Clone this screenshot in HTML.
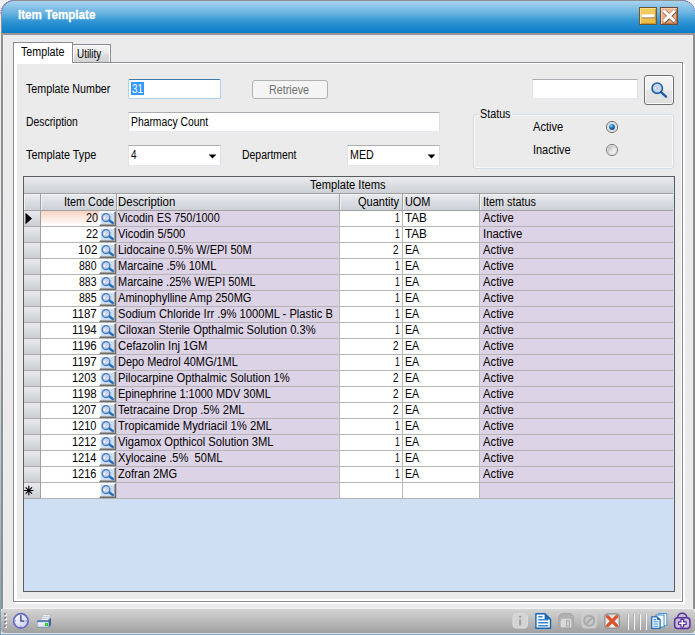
<!DOCTYPE html>
<html lang="en"><head><meta charset="utf-8"><title>Item Template</title>
<style>
html,body{margin:0;padding:0}
body{width:695px;height:635px;overflow:hidden;position:relative;background:#f0f0f0;font-family:"Liberation Sans",sans-serif;font-size:12px;color:#000}
div,span,svg{position:absolute;box-sizing:border-box}
.t{white-space:pre;line-height:14px;height:14px;transform-origin:0 0}
.t.b{font-weight:bold;-webkit-text-stroke:.3px #fff}
#edgeL{left:0;top:14px;width:1px;height:621px;background:linear-gradient(#eef0f2 0%,#e6ebef 45%,#9db9cb 85%,#6f9db8 100%)}
#edgeB{left:0;top:633px;width:695px;height:2px;background:#79a4c7}
#win{left:1px;top:20px;width:694px;height:589px;background:#ebebeb;border:2px solid #8e8e8e;border-top:0;border-bottom:0;box-shadow:inset 1px 0 0 #eef0f2,inset -1px 0 0 #eef0f2}
#title{left:1px;top:0;width:694px;height:33px;border-left:1px solid #8e8e8e;border-top:1px solid #8e8e8e;border-radius:13px 13px 0 0;background:linear-gradient(#a8d4ee 0%,#6db5e1 35%,#2f94d4 65%,#0b7bc6 100%)}
#title .tt{left:16px;top:7px;color:#fff;font-weight:bold;font-size:12px;line-height:16px;white-space:pre;transform:scaleX(.93);transform-origin:0 0}
#tline{left:1px;top:33px;width:694px;height:2px;background:#9a9695}
/* caption buttons */
.cb{top:7px;width:18px;height:18px;border:1px solid #6b4a22}
/* tabs */
#pane{left:13px;top:62px;width:670px;height:540px;background:#fff;border:1px solid #898c95;box-shadow:2px 2px 0 #fff}
#page{left:17px;top:64px;width:664px;height:535px;background:#ebebeb}
#tab1{left:13px;top:42px;width:60px;height:21px;background:#fff;border:1px solid #898c95;border-bottom:0}
#tab2{left:72px;top:44px;width:39px;height:18px;border:1px solid #898c95;border-bottom:0;background:linear-gradient(#f3f3f3 0%,#ececec 48%,#dedede 52%,#d3d3d3 100%);box-shadow:inset 1px 1px 0 #fbfbfb,inset -1px 0 0 #fbfbfb}
/* inputs */
.in{background:#fff;border:1px solid #e3e9ef;border-top-color:#abadb3;border-left-color:#e2e3ea;border-right-color:#dbdfe6}
.in.foc{border-color:#b0d0e8;border-top-color:#3d7bad;border-radius:2px}
.arr{width:0;height:0;border-left:4px solid transparent;border-right:4px solid transparent;border-top:4px solid #000}
#btnR{left:252px;top:80px;width:76px;height:19px;border:1px solid #adb2b5;border-radius:3px;background:#f4f4f4;color:#838383}
#btnS{left:644px;top:75px;width:30px;height:30px;border:1px solid #707070;border-radius:3px;background:linear-gradient(#f4f4f4 0%,#efefef 48%,#e6e6e6 52%,#dedede 100%);box-shadow:inset 0 0 0 1px #fbfbfb}
#grp{left:473px;top:114px;width:201px;height:55px;border:1px solid #d3dfe8;border-radius:3px;background:transparent;box-shadow:inset 0 0 0 1px #f6f6f6}
.rad{width:12px;height:12px;border-radius:50%;border:1px solid #8e8f8f;background:radial-gradient(circle at 50% 50%,#fdfdfd 0%,#e4e4e4 55%,#c4c4c4 100%)}
/* grid */
#grid{left:23px;top:176px;width:652px;height:416px;border:1px solid #5c5c5c;background:#cfdff3;overflow:hidden}
#grid .cap{left:0;top:0;width:649px;height:17px;background:linear-gradient(#e9ebee,#cdd0d6);border-bottom:1px solid #a0a0a0}
#grid .hdr{left:0;top:17px;width:650px;height:17px}
#grid .hc{top:0;height:17px;background:linear-gradient(#e9ebee,#cdd0d6);border-right:1px solid #a0a0a0;border-bottom:1px solid #a0a0a0;box-shadow:inset 1px 1px 0 #f1f2f4;overflow:hidden}
.row{left:0;width:650px;height:16px}
.rs{left:0;top:0;width:17px;height:16px;background:linear-gradient(#e8eaed,#cbced4);border-right:1px solid #a0a0a0;border-bottom:1px solid #a8a8a8}
.c{top:0;height:16px;border-right:1px solid #bababa;border-bottom:1px solid #b4b4b4;overflow:hidden}
.c.w{background:#fff}
.c.p{background:#ddd3e6}
.c.act{background:linear-gradient(#fbd3c4 0%,#fdece5 55%,#fff 100%)}
.sb{right:0;top:0;width:17px;height:15px;background:#cddff5;border:1px solid #6b6b6b;border-top-color:#fff;border-left-color:#fff;box-shadow:inset -1px -1px 0 #a3a3a3,inset 1px 1px 0 #f1f6fd}
.sb .mg{left:-1px;top:-1px}
.star{font-size:13px}
/* toolbar */
#tb{left:1px;top:609px;width:694px;height:24px;border-radius:4px;background:linear-gradient(#d4d4d4 0%,#bebebe 45%,#a8a8a8 85%,#a1a1a1 100%)}
#tbl{left:1px;top:633px;width:694px;height:1px;background:#e2e4e6}

#tbh{left:3px;top:608px;width:690px;height:1px;background:#f3f3f3}

</style></head>
<body>
<div id="edgeL"></div><div id="edgeB"></div>
<div id="win"></div>
<div id="title"></div>
<div id="tline"></div>
<svg id="dots" width="695" height="16" viewBox="0 0 695 16" style="left:0;top:0"><path d="M0.7 13.4 A13.2 13.2 0 0 1 13.4 0.5" fill="none" stroke="#5c5cf2" stroke-width="1" stroke-dasharray="1.1 1.3"/><path d="M682.2 0.3 A13 13 0 0 1 695.2 12.6" fill="none" stroke="#5c5cf2" stroke-width="1" stroke-dasharray="1.1 1.3"/></svg>
<div class="cb" id="bmin" style="left:639px;background:linear-gradient(#f6cd63,#edba43);border-color:#6d5b38;box-shadow:inset 1px 1px 0 #f9dd8e,inset -1px -1px 0 #c6962f"><svg width="16" height="16" viewBox="0 0 16 16" style="left:0;top:0"><rect x="1.9" y="6.7" width="13" height="3.6" rx="1.2" fill="#6f5f40"/><rect x="1.7" y="6.3" width="13" height="3.2" rx="1.2" fill="#fff"/></svg></div>
<div class="cb" id="bcls" style="left:660px;background:linear-gradient(#f6b98e,#e79a69);border-color:#6b4a38;box-shadow:inset 1px 1px 0 #fbd0b0,inset -1px -1px 0 #b8744a"><svg width="16" height="16" viewBox="0 0 16 16" style="left:0;top:0"><path d="M3 3.1 L13.9 13.7 M13.9 3.1 L3 13.7" stroke="#4e3a30" stroke-width="4.2" stroke-linecap="butt" opacity=".85"/><path d="M2.7 2.7 L13.7 13.4 M13.7 2.7 L2.7 13.4" stroke="#fff" stroke-width="3" stroke-linecap="butt"/></svg></div>
<div id="tbh"></div><div id="pane"></div><div id="page"></div>
<div id="tab2"></div>
<div id="tab1"></div>
<div class="in foc" style="left:128px;top:79px;width:93px;height:20px"><div style="left:2px;top:2px;width:13px;height:13px;background:#3399ff"></div></div>
<div class="in" style="left:128px;top:112px;width:312px;height:20px"></div>
<div class="in" style="left:128px;top:145px;width:93px;height:21px"><svg width="9" height="5" viewBox="0 0 9 5" style="left:79px;top:8px"><path d="M0.6 0.5 H8.4 L4.5 4.6 Z" fill="#000"/></svg></div>
<div class="in" style="left:347px;top:145px;width:93px;height:21px"><svg width="9" height="5" viewBox="0 0 9 5" style="left:79px;top:8px"><path d="M0.6 0.5 H8.4 L4.5 4.6 Z" fill="#000"/></svg></div>
<div id="btnR"></div>
<div class="in" style="left:532px;top:79px;width:106px;height:20px"></div>
<div id="btnS"><svg width="20" height="20" viewBox="0 0 20 20" style="left:4px;top:4px"><circle cx="8.2" cy="8.2" r="5.2" fill="#c9d3ec" stroke="#1d5fa6" stroke-width="1.6"/><circle cx="6.4" cy="8" r="1.5" fill="#fff" stroke="#8fb0dc" stroke-width=".6"/><path d="M12.3 12.3 L17 16.6" stroke="#1d5fa6" stroke-width="2.4" stroke-linecap="round"/></svg></div>
<div id="grp"></div><div style="left:479px;top:113px;width:34px;height:4px;background:#ebebeb"></div>
<svg width="14" height="14" viewBox="0 0 14 14" style="left:605px;top:120px"><defs><radialGradient id="rdot" cx=".38" cy=".3" r=".75"><stop offset="0" stop-color="#9fe0ff"/><stop offset=".35" stop-color="#2a8ad0"/><stop offset="1" stop-color="#083a78"/></radialGradient><linearGradient id="roff" x1="0" y1="0" x2="1" y2="1"><stop offset="0" stop-color="#b4b4b4"/><stop offset=".55" stop-color="#e8e8e8"/><stop offset="1" stop-color="#ffffff"/></linearGradient></defs><circle cx="7" cy="7" r="5.6" fill="#f6f6f6" stroke="#6e6e6e" stroke-width="1"/><circle cx="7" cy="7" r="4.2" fill="#eef3f7" stroke="#b9c4cc" stroke-width=".7"/><circle cx="7" cy="7" r="2.9" fill="url(#rdot)"/></svg>
<svg width="14" height="14" viewBox="0 0 14 14" style="left:605px;top:143px"><circle cx="7" cy="7" r="5.6" fill="#f6f6f6" stroke="#7a7a7a" stroke-width="1"/><circle cx="7" cy="7" r="4.3" fill="url(#roff)" stroke="#c4c4c4" stroke-width=".6"/></svg>

<div id="grid">
<div class="cap"></div>
<div class="hdr">
<div class="hc" style="left:0px;width:17px"></div>
<div class="hc" style="left:17px;width:76px"></div>
<div class="hc" style="left:93px;width:223px"></div>
<div class="hc" style="left:316px;width:63px"></div>
<div class="hc" style="left:379px;width:77px"></div>
<div class="hc" style="left:456px;width:193px;border-right:0"></div>
</div>
<div class="row" style="top:34px">
<div class="rs"><svg width="8" height="13" viewBox="0 0 8 13" style="left:1px;top:1px"><path d="M0.5 0.8 L7 6.5 L0.5 12.2 Z" fill="#000"/></svg></div>
<div class="c w act" style="left:17px;width:76px"><span class="sb"><svg class="mg" width="17" height="15" viewBox="0 0 17 15"><circle cx="7" cy="6.6" r="3.9" fill="#cbd2ef" stroke="#3b78bc" stroke-width="1.3"/><circle cx="5.6" cy="6.7" r="1" fill="#fff"/><path d="M10.4 9.5 L13.8 12" stroke="#2d6db3" stroke-width="2.4" stroke-linecap="round"/></svg></span></div>
<div class="c p" style="left:93px;width:223px"></div>
<div class="c w" style="left:316px;width:63px"></div>
<div class="c w" style="left:379px;width:77px"></div>
<div class="c p" style="left:456px;width:193px;border-right:0"></div>
</div>
<div class="row" style="top:50px">
<div class="rs"></div>
<div class="c w" style="left:17px;width:76px"><span class="sb"><svg class="mg" width="17" height="15" viewBox="0 0 17 15"><circle cx="7" cy="6.6" r="3.9" fill="#cbd2ef" stroke="#3b78bc" stroke-width="1.3"/><circle cx="5.6" cy="6.7" r="1" fill="#fff"/><path d="M10.4 9.5 L13.8 12" stroke="#2d6db3" stroke-width="2.4" stroke-linecap="round"/></svg></span></div>
<div class="c p" style="left:93px;width:223px"></div>
<div class="c w" style="left:316px;width:63px"></div>
<div class="c w" style="left:379px;width:77px"></div>
<div class="c p" style="left:456px;width:193px;border-right:0"></div>
</div>
<div class="row" style="top:66px">
<div class="rs"></div>
<div class="c w" style="left:17px;width:76px"><span class="sb"><svg class="mg" width="17" height="15" viewBox="0 0 17 15"><circle cx="7" cy="6.6" r="3.9" fill="#cbd2ef" stroke="#3b78bc" stroke-width="1.3"/><circle cx="5.6" cy="6.7" r="1" fill="#fff"/><path d="M10.4 9.5 L13.8 12" stroke="#2d6db3" stroke-width="2.4" stroke-linecap="round"/></svg></span></div>
<div class="c p" style="left:93px;width:223px"></div>
<div class="c w" style="left:316px;width:63px"></div>
<div class="c w" style="left:379px;width:77px"></div>
<div class="c p" style="left:456px;width:193px;border-right:0"></div>
</div>
<div class="row" style="top:82px">
<div class="rs"></div>
<div class="c w" style="left:17px;width:76px"><span class="sb"><svg class="mg" width="17" height="15" viewBox="0 0 17 15"><circle cx="7" cy="6.6" r="3.9" fill="#cbd2ef" stroke="#3b78bc" stroke-width="1.3"/><circle cx="5.6" cy="6.7" r="1" fill="#fff"/><path d="M10.4 9.5 L13.8 12" stroke="#2d6db3" stroke-width="2.4" stroke-linecap="round"/></svg></span></div>
<div class="c p" style="left:93px;width:223px"></div>
<div class="c w" style="left:316px;width:63px"></div>
<div class="c w" style="left:379px;width:77px"></div>
<div class="c p" style="left:456px;width:193px;border-right:0"></div>
</div>
<div class="row" style="top:98px">
<div class="rs"></div>
<div class="c w" style="left:17px;width:76px"><span class="sb"><svg class="mg" width="17" height="15" viewBox="0 0 17 15"><circle cx="7" cy="6.6" r="3.9" fill="#cbd2ef" stroke="#3b78bc" stroke-width="1.3"/><circle cx="5.6" cy="6.7" r="1" fill="#fff"/><path d="M10.4 9.5 L13.8 12" stroke="#2d6db3" stroke-width="2.4" stroke-linecap="round"/></svg></span></div>
<div class="c p" style="left:93px;width:223px"></div>
<div class="c w" style="left:316px;width:63px"></div>
<div class="c w" style="left:379px;width:77px"></div>
<div class="c p" style="left:456px;width:193px;border-right:0"></div>
</div>
<div class="row" style="top:114px">
<div class="rs"></div>
<div class="c w" style="left:17px;width:76px"><span class="sb"><svg class="mg" width="17" height="15" viewBox="0 0 17 15"><circle cx="7" cy="6.6" r="3.9" fill="#cbd2ef" stroke="#3b78bc" stroke-width="1.3"/><circle cx="5.6" cy="6.7" r="1" fill="#fff"/><path d="M10.4 9.5 L13.8 12" stroke="#2d6db3" stroke-width="2.4" stroke-linecap="round"/></svg></span></div>
<div class="c p" style="left:93px;width:223px"></div>
<div class="c w" style="left:316px;width:63px"></div>
<div class="c w" style="left:379px;width:77px"></div>
<div class="c p" style="left:456px;width:193px;border-right:0"></div>
</div>
<div class="row" style="top:130px">
<div class="rs"></div>
<div class="c w" style="left:17px;width:76px"><span class="sb"><svg class="mg" width="17" height="15" viewBox="0 0 17 15"><circle cx="7" cy="6.6" r="3.9" fill="#cbd2ef" stroke="#3b78bc" stroke-width="1.3"/><circle cx="5.6" cy="6.7" r="1" fill="#fff"/><path d="M10.4 9.5 L13.8 12" stroke="#2d6db3" stroke-width="2.4" stroke-linecap="round"/></svg></span></div>
<div class="c p" style="left:93px;width:223px"></div>
<div class="c w" style="left:316px;width:63px"></div>
<div class="c w" style="left:379px;width:77px"></div>
<div class="c p" style="left:456px;width:193px;border-right:0"></div>
</div>
<div class="row" style="top:146px">
<div class="rs"></div>
<div class="c w" style="left:17px;width:76px"><span class="sb"><svg class="mg" width="17" height="15" viewBox="0 0 17 15"><circle cx="7" cy="6.6" r="3.9" fill="#cbd2ef" stroke="#3b78bc" stroke-width="1.3"/><circle cx="5.6" cy="6.7" r="1" fill="#fff"/><path d="M10.4 9.5 L13.8 12" stroke="#2d6db3" stroke-width="2.4" stroke-linecap="round"/></svg></span></div>
<div class="c p" style="left:93px;width:223px"></div>
<div class="c w" style="left:316px;width:63px"></div>
<div class="c w" style="left:379px;width:77px"></div>
<div class="c p" style="left:456px;width:193px;border-right:0"></div>
</div>
<div class="row" style="top:162px">
<div class="rs"></div>
<div class="c w" style="left:17px;width:76px"><span class="sb"><svg class="mg" width="17" height="15" viewBox="0 0 17 15"><circle cx="7" cy="6.6" r="3.9" fill="#cbd2ef" stroke="#3b78bc" stroke-width="1.3"/><circle cx="5.6" cy="6.7" r="1" fill="#fff"/><path d="M10.4 9.5 L13.8 12" stroke="#2d6db3" stroke-width="2.4" stroke-linecap="round"/></svg></span></div>
<div class="c p" style="left:93px;width:223px"></div>
<div class="c w" style="left:316px;width:63px"></div>
<div class="c w" style="left:379px;width:77px"></div>
<div class="c p" style="left:456px;width:193px;border-right:0"></div>
</div>
<div class="row" style="top:178px">
<div class="rs"></div>
<div class="c w" style="left:17px;width:76px"><span class="sb"><svg class="mg" width="17" height="15" viewBox="0 0 17 15"><circle cx="7" cy="6.6" r="3.9" fill="#cbd2ef" stroke="#3b78bc" stroke-width="1.3"/><circle cx="5.6" cy="6.7" r="1" fill="#fff"/><path d="M10.4 9.5 L13.8 12" stroke="#2d6db3" stroke-width="2.4" stroke-linecap="round"/></svg></span></div>
<div class="c p" style="left:93px;width:223px"></div>
<div class="c w" style="left:316px;width:63px"></div>
<div class="c w" style="left:379px;width:77px"></div>
<div class="c p" style="left:456px;width:193px;border-right:0"></div>
</div>
<div class="row" style="top:194px">
<div class="rs"></div>
<div class="c w" style="left:17px;width:76px"><span class="sb"><svg class="mg" width="17" height="15" viewBox="0 0 17 15"><circle cx="7" cy="6.6" r="3.9" fill="#cbd2ef" stroke="#3b78bc" stroke-width="1.3"/><circle cx="5.6" cy="6.7" r="1" fill="#fff"/><path d="M10.4 9.5 L13.8 12" stroke="#2d6db3" stroke-width="2.4" stroke-linecap="round"/></svg></span></div>
<div class="c p" style="left:93px;width:223px"></div>
<div class="c w" style="left:316px;width:63px"></div>
<div class="c w" style="left:379px;width:77px"></div>
<div class="c p" style="left:456px;width:193px;border-right:0"></div>
</div>
<div class="row" style="top:210px">
<div class="rs"></div>
<div class="c w" style="left:17px;width:76px"><span class="sb"><svg class="mg" width="17" height="15" viewBox="0 0 17 15"><circle cx="7" cy="6.6" r="3.9" fill="#cbd2ef" stroke="#3b78bc" stroke-width="1.3"/><circle cx="5.6" cy="6.7" r="1" fill="#fff"/><path d="M10.4 9.5 L13.8 12" stroke="#2d6db3" stroke-width="2.4" stroke-linecap="round"/></svg></span></div>
<div class="c p" style="left:93px;width:223px"></div>
<div class="c w" style="left:316px;width:63px"></div>
<div class="c w" style="left:379px;width:77px"></div>
<div class="c p" style="left:456px;width:193px;border-right:0"></div>
</div>
<div class="row" style="top:226px">
<div class="rs"></div>
<div class="c w" style="left:17px;width:76px"><span class="sb"><svg class="mg" width="17" height="15" viewBox="0 0 17 15"><circle cx="7" cy="6.6" r="3.9" fill="#cbd2ef" stroke="#3b78bc" stroke-width="1.3"/><circle cx="5.6" cy="6.7" r="1" fill="#fff"/><path d="M10.4 9.5 L13.8 12" stroke="#2d6db3" stroke-width="2.4" stroke-linecap="round"/></svg></span></div>
<div class="c p" style="left:93px;width:223px"></div>
<div class="c w" style="left:316px;width:63px"></div>
<div class="c w" style="left:379px;width:77px"></div>
<div class="c p" style="left:456px;width:193px;border-right:0"></div>
</div>
<div class="row" style="top:242px">
<div class="rs"></div>
<div class="c w" style="left:17px;width:76px"><span class="sb"><svg class="mg" width="17" height="15" viewBox="0 0 17 15"><circle cx="7" cy="6.6" r="3.9" fill="#cbd2ef" stroke="#3b78bc" stroke-width="1.3"/><circle cx="5.6" cy="6.7" r="1" fill="#fff"/><path d="M10.4 9.5 L13.8 12" stroke="#2d6db3" stroke-width="2.4" stroke-linecap="round"/></svg></span></div>
<div class="c p" style="left:93px;width:223px"></div>
<div class="c w" style="left:316px;width:63px"></div>
<div class="c w" style="left:379px;width:77px"></div>
<div class="c p" style="left:456px;width:193px;border-right:0"></div>
</div>
<div class="row" style="top:258px">
<div class="rs"></div>
<div class="c w" style="left:17px;width:76px"><span class="sb"><svg class="mg" width="17" height="15" viewBox="0 0 17 15"><circle cx="7" cy="6.6" r="3.9" fill="#cbd2ef" stroke="#3b78bc" stroke-width="1.3"/><circle cx="5.6" cy="6.7" r="1" fill="#fff"/><path d="M10.4 9.5 L13.8 12" stroke="#2d6db3" stroke-width="2.4" stroke-linecap="round"/></svg></span></div>
<div class="c p" style="left:93px;width:223px"></div>
<div class="c w" style="left:316px;width:63px"></div>
<div class="c w" style="left:379px;width:77px"></div>
<div class="c p" style="left:456px;width:193px;border-right:0"></div>
</div>
<div class="row" style="top:274px">
<div class="rs"></div>
<div class="c w" style="left:17px;width:76px"><span class="sb"><svg class="mg" width="17" height="15" viewBox="0 0 17 15"><circle cx="7" cy="6.6" r="3.9" fill="#cbd2ef" stroke="#3b78bc" stroke-width="1.3"/><circle cx="5.6" cy="6.7" r="1" fill="#fff"/><path d="M10.4 9.5 L13.8 12" stroke="#2d6db3" stroke-width="2.4" stroke-linecap="round"/></svg></span></div>
<div class="c p" style="left:93px;width:223px"></div>
<div class="c w" style="left:316px;width:63px"></div>
<div class="c w" style="left:379px;width:77px"></div>
<div class="c p" style="left:456px;width:193px;border-right:0"></div>
</div>
<div class="row" style="top:290px">
<div class="rs"></div>
<div class="c w" style="left:17px;width:76px"><span class="sb"><svg class="mg" width="17" height="15" viewBox="0 0 17 15"><circle cx="7" cy="6.6" r="3.9" fill="#cbd2ef" stroke="#3b78bc" stroke-width="1.3"/><circle cx="5.6" cy="6.7" r="1" fill="#fff"/><path d="M10.4 9.5 L13.8 12" stroke="#2d6db3" stroke-width="2.4" stroke-linecap="round"/></svg></span></div>
<div class="c p" style="left:93px;width:223px"></div>
<div class="c w" style="left:316px;width:63px"></div>
<div class="c w" style="left:379px;width:77px"></div>
<div class="c p" style="left:456px;width:193px;border-right:0"></div>
</div>
<div class="row" style="top:306px">
<div class="rs"><svg width="12" height="12" viewBox="0 0 12 12" style="left:0px;top:2px"><path d="M4.8 0.7 V10.3 M0.1 5.5 H9.5 M1.6 2.3 L8 8.7 M8 2.3 L1.6 8.7" stroke="#000" stroke-width="1.15" fill="none"/></svg></div>
<div class="c w" style="left:17px;width:76px"><span class="sb"><svg class="mg" width="17" height="15" viewBox="0 0 17 15"><circle cx="7" cy="6.6" r="3.9" fill="#cbd2ef" stroke="#3b78bc" stroke-width="1.3"/><circle cx="5.6" cy="6.7" r="1" fill="#fff"/><path d="M10.4 9.5 L13.8 12" stroke="#2d6db3" stroke-width="2.4" stroke-linecap="round"/></svg></span></div>
<div class="c p" style="left:93px;width:223px"></div>
<div class="c w" style="left:316px;width:63px"></div>
<div class="c w" style="left:379px;width:77px"></div>
<div class="c p" style="left:456px;width:193px;border-right:0"></div>
</div>
</div>
<div id="tb"></div>
<div id="tbl"></div>
<svg id="tbi" width="695" height="27" viewBox="0 608 695 27" style="left:0;top:608px">
<defs>
<linearGradient id="gClock" x1="0" y1="0" x2="1" y2="1"><stop offset="0" stop-color="#ffffff"/><stop offset="1" stop-color="#c4caf0"/></linearGradient>
<linearGradient id="gPr" x1="0" y1="0" x2="0" y2="1"><stop offset="0" stop-color="#ffffff"/><stop offset="1" stop-color="#c9d3e6"/></linearGradient>
<linearGradient id="gX" x1="0" y1="0" x2="0" y2="1"><stop offset="0" stop-color="#dedede"/><stop offset="1" stop-color="#f4f4f4"/></linearGradient>
</defs>
<!-- grip -->
<g fill="#fff"><rect x="5" y="614" width="2" height="2"/><rect x="5" y="618" width="2" height="2"/><rect x="5" y="622" width="2" height="2"/><rect x="5" y="626" width="2" height="2"/></g>
<g fill="#8a8a8a"><rect x="4" y="613" width="2" height="2"/><rect x="4" y="617" width="2" height="2"/><rect x="4" y="621" width="2" height="2"/><rect x="4" y="625" width="2" height="2"/></g>
<!-- clock -->
<circle cx="20.9" cy="620.9" r="7.2" fill="url(#gClock)" stroke="#6668c6" stroke-width="1.7"/>
<g fill="#7f84d6"><rect x="20.4" y="614.8" width="1" height="1.2"/><rect x="20.4" y="625.8" width="1" height="1.2"/><rect x="14.8" y="620.4" width="1.2" height="1"/><rect x="25.8" y="620.4" width="1.2" height="1"/></g>
<path d="M20.9 615.9 V621 H23.9" fill="none" stroke="#30317f" stroke-width="1.25" stroke-linecap="round" stroke-linejoin="round"/>
<!-- printer -->
<path d="M40.5 620.5 L43 614.6 H50.6 L48.2 620.5 Z" fill="#f2f4f8" stroke="#a9b3c6" stroke-width=".8"/>
<path d="M42.6 616.6 H48.6 M42 618.4 H47.8" stroke="#b8c0d0" stroke-width=".8"/>
<path d="M37 621.6 Q37 620 38.6 620 H48.4 L51 618 V625 L48.6 627.6 H37.8 Q37 627.6 37 626.8 Z" fill="#5e83b4"/>
<path d="M48.6 620.4 L51 618 V625 L48.6 627.6 Z" fill="#3f6496"/>
<rect x="37.4" y="622.2" width="11.2" height="4.8" rx=".6" fill="url(#gPr)"/>
<rect x="45" y="623" width="3" height="3" fill="#22c022"/><rect x="45.8" y="623.6" width="1.2" height="1.2" fill="#9cf07a"/>
<!-- info (disabled) -->
<rect x="513" y="613.9" width="14.4" height="14.2" rx="3.2" fill="#d4d4d4" stroke="#dedede" stroke-width="1"/>
<circle cx="520.1" cy="616.9" r="1.15" fill="#9c9c9c"/><rect x="519.1" y="619.2" width="2" height="6.4" rx=".6" fill="#a2a2a2"/>
<!-- document -->
<path d="M535.9 613.7 H545 L550.5 619.2 V628.3 H535.9 Z" fill="#fff" stroke="#1766b2" stroke-width="1.4" stroke-linejoin="round"/>
<path d="M544.6 613.4 L550.8 619.6 H544.6 Z" fill="#1766b2"/>
<path d="M538.2 616.7 H542.6 M538.2 619.7 H548.2 M538.2 622.7 H548.2 M538.2 625.7 H548.2" stroke="#3787cf" stroke-width="1.4"/>
<!-- disabled save -->
<path d="M561.3 613.7 H570.9 L573.4 616.4 V625.8 L570.9 628.4 H561.3 L558.8 625.8 V616.4 Z" fill="#b2b2b2" stroke="#a2a2a2" stroke-width="1"/>
<path d="M560.8 627.2 V621 Q560.8 618.8 563 618.8 H569 Q571.3 618.8 571.3 621 V627.2 Z" fill="#dadada"/>
<rect x="566.4" y="620.8" width="3" height="5.4" fill="#d0d0d0" stroke="#a6a6a6" stroke-width=".9"/>
<!-- disabled no-sign -->
<rect x="582.1" y="613.7" width="14.2" height="14.2" rx="3" fill="#c9c9c9" stroke="#d2d2d2" stroke-width="1"/>
<circle cx="589.2" cy="620.8" r="5" fill="none" stroke="#a9a9a9" stroke-width="1.9"/>
<path d="M585.9 624.1 L592.5 617.5" stroke="#a9a9a9" stroke-width="1.9"/>
<!-- red X -->
<rect x="604.9" y="613.8" width="14.4" height="14.3" rx="3.2" fill="url(#gX)" stroke="#8c8c8c" stroke-width="1.3"/>
<path d="M607.6 616.6 L616.6 625.6 M616.6 616.6 L607.6 625.6" stroke="#d8532a" stroke-width="3.3" stroke-linecap="round"/>
<!-- separators -->
<g fill="#f6f6f6"><rect x="628" y="614.5" width="1" height="15.5"/><rect x="634" y="614.5" width="1" height="15.5"/><rect x="640" y="614.5" width="1" height="15.5"/><rect x="646" y="614.5" width="1" height="15.5"/></g>
<g fill="#a6a6a6" opacity=".6"><rect x="627" y="614.5" width="1" height="15.5"/><rect x="633" y="614.5" width="1" height="15.5"/><rect x="639" y="614.5" width="1" height="15.5"/><rect x="645" y="614.5" width="1" height="15.5"/></g>
<!-- copy docs -->
<rect x="658.8" y="613.5" width="8" height="11.8" fill="#fff" stroke="#4f9ada" stroke-width="1"/>
<rect x="656" y="615" width="8" height="12" fill="#fff" stroke="#3b8ad2" stroke-width="1"/>
<path d="M651.7 616.9 H657.2 L660.1 619.8 V628.4 H651.7 Z" fill="#fff" stroke="#1c6cb8" stroke-width="1.3" stroke-linejoin="round"/>
<path d="M656.9 616.6 L660.4 620.1 H656.9 Z" fill="#1c6cb8"/>
<path d="M653.4 619.6 H656 M653.4 621.8 H658.4 M653.4 624 H658.4 M653.4 626.2 H658.4" stroke="#3787cf" stroke-width="1.1"/>
<!-- medical bag -->
<path d="M677.6 617.8 C677.6 611.8 686.8 611.8 686.8 617.8" fill="#c6c2d4" stroke="#5a2d9c" stroke-width="1.5"/>
<rect x="674.7" y="617.8" width="15.2" height="10.6" rx="3" fill="#c9c5da" stroke="#5a2d9c" stroke-width="1.5"/>
<path d="M681 619.4 H683.6 V621.9 H686.1 V624.5 H683.6 V627 H681 V624.5 H678.5 V621.9 H681 Z" fill="#fff" stroke="#5a2d9c" stroke-width="1.2" stroke-linejoin="round"/>
</svg>

<div id="txt">
<span class="t b" id="t_title" style="left:17.70px;top:8px;transform:scaleX(0.9700);color:#fff">Item Template</span>
<span class="t " id="t_tab1" style="left:21.00px;top:45px;transform:scaleX(0.8929)">Template</span>
<span class="t " id="t_tab2" style="left:77.20px;top:47px;transform:scaleX(0.8244)">Utility</span>
<span class="t " id="l_num" style="left:26.10px;top:82px;transform:scaleX(0.8905)">Template Number</span>
<span class="t " id="l_desc" style="left:26.10px;top:115px;transform:scaleX(0.8642)">Description</span>
<span class="t " id="l_type" style="left:26.10px;top:148px;transform:scaleX(0.9023)">Template Type</span>
<span class="t " id="l_dept" style="left:241.50px;top:148px;transform:scaleX(0.8692)">Department</span>
<span class="t " id="v_num" style="left:131.70px;top:82px;transform:scaleX(0.8186);color:#fff">31</span>
<span class="t " id="v_desc" style="left:131.10px;top:115px;transform:scaleX(0.8620)">Pharmacy Count</span>
<span class="t " id="v_type" style="left:131.10px;top:148px;transform:scaleX(0.8325)">4</span>
<span class="t " id="v_dept" style="left:350.20px;top:148px;transform:scaleX(0.8895)">MED</span>
<span class="t " id="retr" style="left:269.10px;top:83px;transform:scaleX(0.8966);color:#707070">Retrieve</span>
<span class="t " id="t_status" style="left:480.30px;top:107px;transform:scaleX(0.8962)">Status</span>
<span class="t " id="active" style="left:533.00px;top:120px;transform:scaleX(0.9238)">Active</span>
<span class="t " id="inactive" style="left:533.00px;top:143px;transform:scaleX(0.9088)">Inactive</span>
<span class="t " id="g_cap" style="left:310.30px;top:178px;transform:scaleX(0.9294)">Template Items</span>
<span class="t " id="h_code" style="left:64.10px;top:195px;transform:scaleX(0.9038)">Item Code</span>
<span class="t " id="h_desc" style="left:118.30px;top:195px;transform:scaleX(0.9543)">Description</span>
<span class="t " id="h_qty" style="left:358.40px;top:195px;transform:scaleX(0.9168)">Quantity</span>
<span class="t " id="h_uom" style="left:405.10px;top:195px;transform:scaleX(0.9087)">UOM</span>
<span class="t " id="h_stat" style="left:482.90px;top:195px;transform:scaleX(0.9034)">Item status</span>
<span class="t " id="code0" style="left:85.80px;top:211px;transform:scaleX(0.9000)">20</span>
<span class="t " id="desc0" style="left:118.30px;top:211px;transform:scaleX(0.9096)">Vicodin ES 750/1000</span>
<span class="t " id="qty0" style="left:394.90px;top:211px;transform:scaleX(0.7187)">1</span>
<span class="t " id="uom0" style="left:405.10px;top:211px;transform:scaleX(0.9754)">TAB</span>
<span class="t " id="st0" style="left:482.50px;top:211px;transform:scaleX(0.9397)">Active</span>
<span class="t " id="code1" style="left:85.80px;top:227px;transform:scaleX(0.9000)">22</span>
<span class="t " id="desc1" style="left:118.30px;top:227px;transform:scaleX(0.9277)">Vicodin 5/500</span>
<span class="t " id="qty1" style="left:394.90px;top:227px;transform:scaleX(0.7187)">1</span>
<span class="t " id="uom1" style="left:405.10px;top:227px;transform:scaleX(0.9754)">TAB</span>
<span class="t " id="st1" style="left:482.50px;top:227px;transform:scaleX(0.9491)">Inactive</span>
<span class="t " id="code2" style="left:77.80px;top:243px;transform:scaleX(0.9696)">102</span>
<span class="t " id="desc2" style="left:118.30px;top:243px;transform:scaleX(0.9158)">Lidocaine 0.5% W/EPI 50M</span>
<span class="t " id="qty2" style="left:392.80px;top:243px;transform:scaleX(0.8325)">2</span>
<span class="t " id="uom2" style="left:405.10px;top:243px;transform:scaleX(0.8858)">EA</span>
<span class="t " id="st2" style="left:482.50px;top:243px;transform:scaleX(0.9397)">Active</span>
<span class="t " id="code3" style="left:78.80px;top:259px;transform:scaleX(0.8745)">880</span>
<span class="t " id="desc3" style="left:118.30px;top:259px;transform:scaleX(0.9213)">Marcaine .5% 10ML</span>
<span class="t " id="qty3" style="left:394.90px;top:259px;transform:scaleX(0.7187)">1</span>
<span class="t " id="uom3" style="left:405.10px;top:259px;transform:scaleX(0.8858)">EA</span>
<span class="t " id="st3" style="left:482.50px;top:259px;transform:scaleX(0.9397)">Active</span>
<span class="t " id="code4" style="left:78.80px;top:275px;transform:scaleX(0.8745)">883</span>
<span class="t " id="desc4" style="left:118.30px;top:275px;transform:scaleX(0.9131)">Marcaine .25% W/EPI 50ML</span>
<span class="t " id="qty4" style="left:394.90px;top:275px;transform:scaleX(0.7187)">1</span>
<span class="t " id="uom4" style="left:405.10px;top:275px;transform:scaleX(0.8858)">EA</span>
<span class="t " id="st4" style="left:482.50px;top:275px;transform:scaleX(0.9397)">Active</span>
<span class="t " id="code5" style="left:78.80px;top:291px;transform:scaleX(0.8745)">885</span>
<span class="t " id="desc5" style="left:118.30px;top:291px;transform:scaleX(0.9221)">Aminophylline Amp 250MG</span>
<span class="t " id="qty5" style="left:394.90px;top:291px;transform:scaleX(0.7187)">1</span>
<span class="t " id="uom5" style="left:405.10px;top:291px;transform:scaleX(0.8858)">EA</span>
<span class="t " id="st5" style="left:482.50px;top:291px;transform:scaleX(0.9397)">Active</span>
<span class="t " id="code6" style="left:72.30px;top:307px;transform:scaleX(0.9546)">1187</span>
<span class="t " id="desc6" style="left:118.30px;top:307px;transform:scaleX(0.9301)">Sodium Chloride Irr .9% 1000ML - Plastic B</span>
<span class="t " id="qty6" style="left:394.90px;top:307px;transform:scaleX(0.7187)">1</span>
<span class="t " id="uom6" style="left:405.10px;top:307px;transform:scaleX(0.8858)">EA</span>
<span class="t " id="st6" style="left:482.50px;top:307px;transform:scaleX(0.9397)">Active</span>
<span class="t " id="code7" style="left:72.30px;top:323px;transform:scaleX(0.9547)">1194</span>
<span class="t " id="desc7" style="left:118.30px;top:323px;transform:scaleX(0.9317)">Ciloxan Sterile Opthalmic Solution 0.3%</span>
<span class="t " id="qty7" style="left:394.90px;top:323px;transform:scaleX(0.7187)">1</span>
<span class="t " id="uom7" style="left:405.10px;top:323px;transform:scaleX(0.8858)">EA</span>
<span class="t " id="st7" style="left:482.50px;top:323px;transform:scaleX(0.9397)">Active</span>
<span class="t " id="code8" style="left:72.30px;top:339px;transform:scaleX(0.9547)">1196</span>
<span class="t " id="desc8" style="left:118.30px;top:339px;transform:scaleX(0.9378)">Cefazolin Inj 1GM</span>
<span class="t " id="qty8" style="left:392.80px;top:339px;transform:scaleX(0.8325)">2</span>
<span class="t " id="uom8" style="left:405.10px;top:339px;transform:scaleX(0.8858)">EA</span>
<span class="t " id="st8" style="left:482.50px;top:339px;transform:scaleX(0.9397)">Active</span>
<span class="t " id="code9" style="left:72.30px;top:355px;transform:scaleX(0.9546)">1197</span>
<span class="t " id="desc9" style="left:118.30px;top:355px;transform:scaleX(0.9113)">Depo Medrol 40MG/1ML</span>
<span class="t " id="qty9" style="left:394.90px;top:355px;transform:scaleX(0.7187)">1</span>
<span class="t " id="uom9" style="left:405.10px;top:355px;transform:scaleX(0.8858)">EA</span>
<span class="t " id="st9" style="left:482.50px;top:355px;transform:scaleX(0.9397)">Active</span>
<span class="t " id="code10" style="left:72.30px;top:371px;transform:scaleX(0.9169)">1203</span>
<span class="t " id="desc10" style="left:118.30px;top:371px;transform:scaleX(0.9329)">Pilocarpine Opthalmic Solution 1%</span>
<span class="t " id="qty10" style="left:392.80px;top:371px;transform:scaleX(0.8325)">2</span>
<span class="t " id="uom10" style="left:405.10px;top:371px;transform:scaleX(0.8858)">EA</span>
<span class="t " id="st10" style="left:482.50px;top:371px;transform:scaleX(0.9397)">Active</span>
<span class="t " id="code11" style="left:72.30px;top:387px;transform:scaleX(0.9547)">1198</span>
<span class="t " id="desc11" style="left:118.30px;top:387px;transform:scaleX(0.9121)">Epinephrine 1:1000 MDV 30ML</span>
<span class="t " id="qty11" style="left:392.80px;top:387px;transform:scaleX(0.8325)">2</span>
<span class="t " id="uom11" style="left:405.10px;top:387px;transform:scaleX(0.8858)">EA</span>
<span class="t " id="st11" style="left:482.50px;top:387px;transform:scaleX(0.9397)">Active</span>
<span class="t " id="code12" style="left:72.30px;top:403px;transform:scaleX(0.9169)">1207</span>
<span class="t " id="desc12" style="left:118.30px;top:403px;transform:scaleX(0.9342)">Tetracaine Drop .5% 2ML</span>
<span class="t " id="qty12" style="left:392.80px;top:403px;transform:scaleX(0.8325)">2</span>
<span class="t " id="uom12" style="left:405.10px;top:403px;transform:scaleX(0.8858)">EA</span>
<span class="t " id="st12" style="left:482.50px;top:403px;transform:scaleX(0.9397)">Active</span>
<span class="t " id="code13" style="left:72.30px;top:419px;transform:scaleX(0.9169)">1210</span>
<span class="t " id="desc13" style="left:118.30px;top:419px;transform:scaleX(0.9406)">Tropicamide Mydriacil 1% 2ML</span>
<span class="t " id="qty13" style="left:394.90px;top:419px;transform:scaleX(0.7187)">1</span>
<span class="t " id="uom13" style="left:405.10px;top:419px;transform:scaleX(0.8858)">EA</span>
<span class="t " id="st13" style="left:482.50px;top:419px;transform:scaleX(0.9397)">Active</span>
<span class="t " id="code14" style="left:72.30px;top:435px;transform:scaleX(0.9169)">1212</span>
<span class="t " id="desc14" style="left:118.30px;top:435px;transform:scaleX(0.9299)">Vigamox Opthicol Solution 3ML</span>
<span class="t " id="qty14" style="left:394.90px;top:435px;transform:scaleX(0.7187)">1</span>
<span class="t " id="uom14" style="left:405.10px;top:435px;transform:scaleX(0.8858)">EA</span>
<span class="t " id="st14" style="left:482.50px;top:435px;transform:scaleX(0.9397)">Active</span>
<span class="t " id="code15" style="left:72.30px;top:451px;transform:scaleX(0.9169)">1214</span>
<span class="t " id="desc15" style="left:118.30px;top:451px;transform:scaleX(0.9257)">Xylocaine .5% &nbsp;50ML</span>
<span class="t " id="qty15" style="left:394.90px;top:451px;transform:scaleX(0.7187)">1</span>
<span class="t " id="uom15" style="left:405.10px;top:451px;transform:scaleX(0.8858)">EA</span>
<span class="t " id="st15" style="left:482.50px;top:451px;transform:scaleX(0.9397)">Active</span>
<span class="t " id="code16" style="left:72.30px;top:467px;transform:scaleX(0.9169)">1216</span>
<span class="t " id="desc16" style="left:118.30px;top:467px;transform:scaleX(0.9231)">Zofran 2MG</span>
<span class="t " id="qty16" style="left:394.90px;top:467px;transform:scaleX(0.7187)">1</span>
<span class="t " id="uom16" style="left:405.10px;top:467px;transform:scaleX(0.8858)">EA</span>
<span class="t " id="st16" style="left:482.50px;top:467px;transform:scaleX(0.9397)">Active</span>
</div>
</body></html>
